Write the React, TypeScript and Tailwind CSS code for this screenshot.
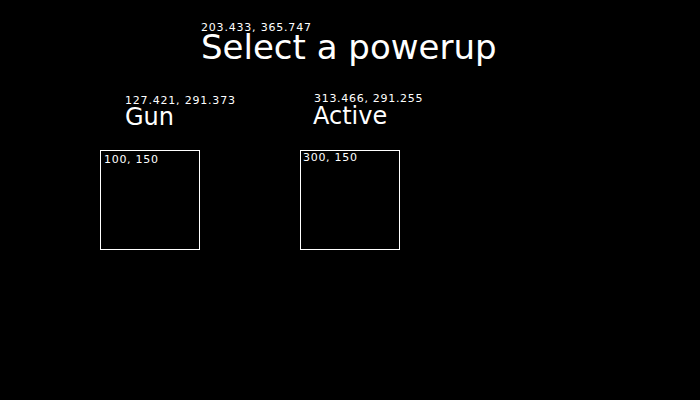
export default function App() {
  return (
    <div
      className="relative w-[700px] h-[400px] overflow-hidden bg-black text-white"
      style={{ fontFamily: '"DejaVu Sans", sans-serif' }}
    >
      {/* title */}
      <div className="absolute left-[201px] top-[22px] flex flex-col">
        <div className="text-[11px] leading-[11px] tracking-[0.8px]">203.433, 365.747</div>
        <div className="text-[34px] leading-[26px] pt-[1px]">Select a powerup</div>
      </div>

      {/* labels */}
      <div className="absolute left-[125px] top-[95px] flex flex-col gap-[2px]">
        <div className="text-[11px] leading-[11px] tracking-[0.8px]">127.421, 291.373</div>
        <div className="text-[24px] leading-[18px]">Gun</div>
      </div>
      <div className="absolute left-[314px] top-[93px] flex flex-col gap-[3px]">
        <div className="text-[11px] leading-[11px] tracking-[0.7px]">313.466, 291.255</div>
        <div className="text-[24px] leading-[18px] -ml-[1px]">Active</div>
      </div>

      {/* slots */}
      <div className="absolute left-[100px] top-[150px] w-[100px] h-[100px] border border-white px-[3px] pt-[2px]">
        <div className="text-[11px] leading-[14px] tracking-[0.7px]">100, 150</div>
      </div>
      <div className="absolute left-[300px] top-[150px] w-[100px] h-[100px] border border-white px-[2px]">
        <div className="text-[11px] leading-[14px] tracking-[0.7px]">300, 150</div>
      </div>
    </div>
  );
}
